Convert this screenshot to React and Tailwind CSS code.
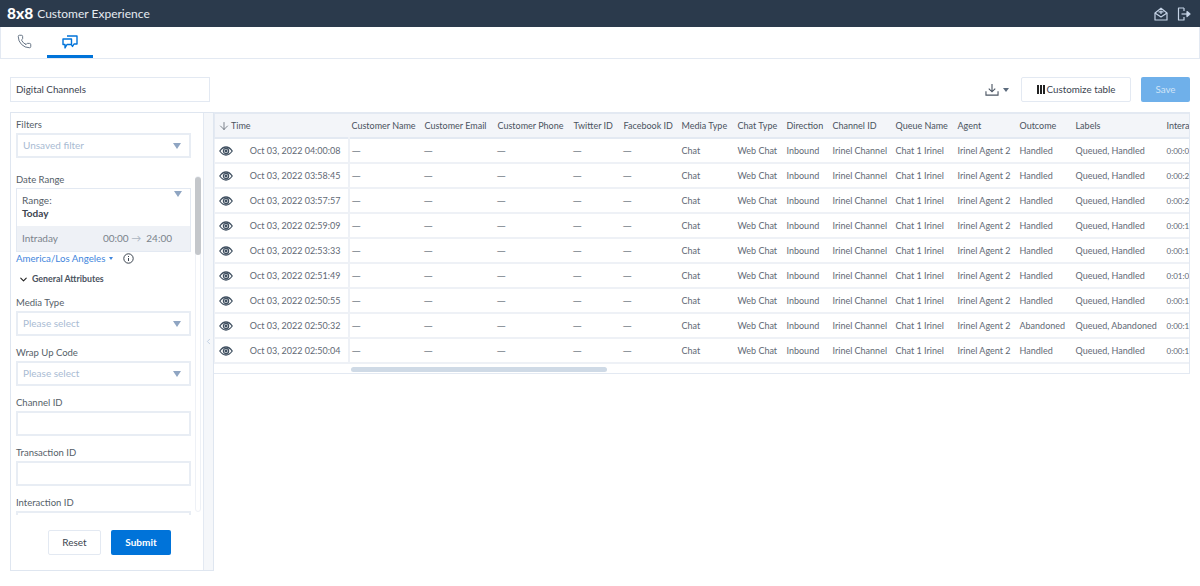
import { ChevronDown, ChevronLeft, ArrowDown, Phone } from "lucide-react";

const rows = [
  ["Oct 03, 2022 04:00:08", "Handled", "Queued, Handled", "0:00:0"],
  ["Oct 03, 2022 03:58:45", "Handled", "Queued, Handled", "0:00:2"],
  ["Oct 03, 2022 03:57:57", "Handled", "Queued, Handled", "0:00:2"],
  ["Oct 03, 2022 02:59:09", "Handled", "Queued, Handled", "0:00:1"],
  ["Oct 03, 2022 02:53:33", "Handled", "Queued, Handled", "0:00:1"],
  ["Oct 03, 2022 02:51:49", "Handled", "Queued, Handled", "0:01:0"],
  ["Oct 03, 2022 02:50:55", "Handled", "Queued, Handled", "0:00:1"],
  ["Oct 03, 2022 02:50:32", "Abandoned", "Queued, Abandoned", "0:00:1"],
  ["Oct 03, 2022 02:50:04", "Handled", "Queued, Handled", "0:00:1"],
];

const headers = ["Customer Name", "Customer Email", "Customer Phone", "Twitter ID", "Facebook ID", "Media Type", "Chat Type", "Direction", "Channel ID", "Queue Name", "Agent", "Outcome", "Labels"];

function Caret() {
  return <span className="w-0 h-0 border-l-[4px] border-r-[4px] border-t-[6px] border-l-transparent border-r-transparent border-t-[#8fa5c2]" />;
}

function Field({ label, placeholder, caret, className = "" }) {
  return (
    <div className={className}>
      <div className="text-[9.5px] leading-[12px] text-[#555e68] mb-[2px]">{label}</div>
      <div className="h-[25px] border-2 border-[#e8edf4] flex items-center justify-between pl-[5px] pr-[8px] text-[10px] text-[#a9bbd3]">
        <span>{placeholder}</span>
        {caret && <Caret />}
      </div>
    </div>
  );
}

function Dash() {
  return <td className="pl-[2px] text-[12px] leading-none text-[#7b838c]">—</td>;
}

function ChatIcon() {
  return (
    <svg width="16" height="15" viewBox="0 0 16 15" fill="none" stroke="#0073d9" strokeWidth="1.4" strokeLinejoin="round">
      <path d="M5 1H15V9H12L10.5 11.5L9 9" />
      <path d="M1 4H9.5V9.5H5L3 13V9.5H1Z" fill="#fff" />
    </svg>
  );
}

function EyeIcon() {
  return (
    <svg width="14" height="10" viewBox="0 0 14 10" fill="none" stroke="#3f4f60" strokeWidth="1.3">
      <path d="M0.8 5C3 1.8 5 1 7 1C9 1 11 1.8 13.2 5C11 8.2 9 9 7 9C5 9 3 8.2 0.8 5Z" />
      <circle cx="7" cy="5" r="2.6" />
      <circle cx="7" cy="5" r="0.8" fill="#3f4f60" />
    </svg>
  );
}

function MailIcon() {
  return (
    <svg width="14" height="14" viewBox="0 0 14 14" fill="none" stroke="#c5d3e6" strokeWidth="1.2" strokeLinejoin="round">
      <path d="M1 6L7 1.2L13 6V13H1Z" />
      <path d="M1 6L7 10L13 6" />
      <path d="M4.5 4.8H9.5M7 3.4V7" />
    </svg>
  );
}

function ExitIcon() {
  return (
    <svg width="14" height="14" viewBox="0 0 14 14" fill="none" stroke="#c5d3e6" strokeWidth="1.2" strokeLinejoin="round">
      <path d="M7 1H1.5V13H7V10" />
      <path d="M7 1V4" />
      <path d="M4.5 7H11" />
      <path d="M10 4.5L13 7L10 9.5Z" fill="#c5d3e6" />
    </svg>
  );
}

function InfoIcon() {
  return (
    <svg width="11" height="11" viewBox="0 0 11 11" fill="none" stroke="#3c4550" strokeWidth="1" className="ml-[10px]">
      <circle cx="5.5" cy="5.5" r="4.7" />
      <path d="M5.5 5V8M5.5 3V4" />
    </svg>
  );
}

export default function App() {
  return (
    <div className="w-[1200px] h-[586px] overflow-hidden bg-white font-['Lato',sans-serif] flex flex-col">
      {/* top bar */}
      <div className="h-[27px] bg-[#2b3a4c] flex items-center justify-between pl-[7px] pr-[9px] shrink-0">
        <div className="flex items-center">
          <span className="text-white font-black text-[15.5px] mr-[4px]">8x8</span>
          <span className="text-[#e6ebf1] text-[12px]">Customer Experience</span>
        </div>
        <div className="flex items-center gap-[9px]">
          <MailIcon />
          <ExitIcon />
        </div>
      </div>

      {/* tabs */}
      <div className="h-[32px] border-b border-x border-[#e3e9f2] flex shrink-0 pl-px">
        <div className="w-[45px] flex items-center justify-center pb-[2px]">
          <Phone size={15} strokeWidth={1.5} className="text-[#5c6b7d]" />
        </div>
        <div className="w-[46px] flex items-center justify-center border-b-[3px] border-[#0073d9] h-[31px] pt-[2px]">
          <ChatIcon />
        </div>
      </div>

      {/* toolbar */}
      <div className="h-[53px] shrink-0 flex items-center justify-between pl-[10px] pr-[10px] pt-[8px]">
        <div className="w-[200px] h-[25px] border border-[#e3e9f2] flex items-center pl-[5px] text-[9.8px] text-[#3c4550]">Digital Channels</div>
        <div className="flex items-center">
          <svg width="14" height="13" viewBox="0 0 15 14" fill="none" stroke="#4b5563" strokeWidth="1.2">
            <path d="M7.5 1V9M4 6L7.5 9.5L11 6" />
            <path d="M1 9V13H14V9" />
          </svg>
          <span className="ml-[4px] mr-[12px] w-0 h-0 border-l-[3px] border-r-[3px] border-t-[4px] border-l-transparent border-r-transparent border-t-[#5c6b7d]" />
          <div className="w-[110px] h-[25px] border border-[#e3e9f2] rounded-[2px] flex items-center justify-center text-[9.8px] text-[#3c4550]">
            <span className="flex gap-px mr-[2px]">
              <span className="w-[2px] h-[9px] bg-[#222]" />
              <span className="w-[2px] h-[9px] bg-[#222]" />
              <span className="w-[2px] h-[9px] bg-[#222]" />
            </span>
            Customize table
          </div>
          <div className="ml-[10px] w-[49px] h-[25px] bg-[#6fb0ea] rounded-[2px] flex items-center justify-center text-[9.8px] text-[#cfe4f7]">Save</div>
        </div>
      </div>

      {/* content */}
      <div className="flex pl-[10px] pr-[10px] items-start">
        {/* filters */}
        <div className="w-[204px] h-[459px] border border-[#dfe6f0] flex shrink-0">
          <div className="w-[192px] flex flex-col shrink-0">
            <div className="h-[402px] overflow-hidden relative pl-[5px] pr-[12px] pt-[6px]">
              <Field label="Filters" placeholder="Unsaved filter" caret />
              <div className="text-[9.5px] leading-[12px] text-[#555e68] mt-[16px] mb-[2px]">Date Range</div>
              <div className="border border-[#e3e9f2]">
                <div className="h-[37px] pl-[5px] pr-[8px] pt-[5px] flex justify-between">
                  <div className="text-[10px] leading-[13px] text-[#555e68]">
                    <div>Range:</div>
                    <div className="font-bold text-[#3c4550]">Today</div>
                  </div>
                  <span className="mt-[1px]"><Caret /></span>
                </div>
                <div className="h-[25px] bg-[#eef1f6] flex items-center pl-[5px] pr-[18px] justify-between text-[10px] text-[#7b838c]">
                  <span>Intraday</span>
                  <span>00:00 <span className="text-[#aab4c0]">→</span>&nbsp; 24:00</span>
                </div>
              </div>
              <div className="flex items-center -mt-px h-[14px] text-[9.7px] text-[#3f86dd]">
                <span>America/Los Angeles</span>
                <span className="ml-[4px] w-0 h-0 border-l-[2px] border-r-[2px] border-t-[3px] border-l-transparent border-r-transparent border-t-[#3f86dd]" />
                <InfoIcon />
              </div>
              <div className="flex items-center mt-[7px] text-[8.8px] font-bold text-[#4a535e] h-[14px]">
                <ChevronDown size={11} strokeWidth={2.4} className="ml-[2px] mr-[3px] text-[#222]" />
                General Attributes
              </div>
              <Field label="Media Type" placeholder="Please select" caret className="mt-[11px]" />
              <Field label="Wrap Up Code" placeholder="Please select" caret className="mt-[11px]" />
              <Field label="Channel ID" className="mt-[11px]" />
              <Field label="Transaction ID" className="mt-[11px]" />
              <Field label="Interaction ID" className="mt-[11px]" />
              {/* scrollbar */}
              <div className="absolute left-[184px] top-[63px] w-[6px] h-[336px] rounded-[3px] border border-[#eef1f6]">
                <div className="h-[78px] bg-[#c4c7cb] rounded-[3px] -mx-px" />
              </div>
            </div>
            <div className="flex-1 flex items-start pl-[37px] pt-[15px] gap-[10px]">
              <div className="w-[53px] h-[25px] border border-[#e3e9f2] rounded-[2px] flex items-center justify-center text-[10px] text-[#3c4550]">Reset</div>
              <div className="w-[60px] h-[25px] bg-[#0073d9] rounded-[2px] flex items-center justify-center text-[10px] font-bold text-white">Submit</div>
            </div>
          </div>
          {/* collapse rail */}
          <div className="flex-1 bg-[#f5f7fa] border-l border-[#e3e9f2] flex items-center justify-center">
            <ChevronLeft size={9} strokeWidth={1.5} className="text-[#9db4d2] -mt-[1px]" />
          </div>
        </div>

        {/* table */}
        <div className="flex-1 min-w-0 h-[262px] border border-l-0 border-[#e3e9f2] border-t-2 overflow-hidden relative">
          <table className="table-fixed w-[1000px] border-collapse text-[9px] text-[#5f6975]">
            <colgroup>
              <col className="w-[134px]" />
              <col className="w-[73px]" />
              <col className="w-[73px]" />
              <col className="w-[76px]" />
              <col className="w-[50px]" />
              <col className="w-[58px]" />
              <col className="w-[56px]" />
              <col className="w-[49px]" />
              <col className="w-[46px]" />
              <col className="w-[63px]" />
              <col className="w-[62px]" />
              <col className="w-[62px]" />
              <col className="w-[56px]" />
              <col className="w-[91px]" />
              <col className="w-[51px]" />
            </colgroup>
            <thead>
              <tr className="h-[24px] bg-[#f3f5f9] border-b-2 border-[#e3e9f2] text-[#4a535e]">
                <th className="font-normal text-left pl-[3px] border-l border-[#e3e9f2]">
                  <span className="flex items-center">
                    <ArrowDown size={12} strokeWidth={1.4} className="mr-px" />Time
                  </span>
                </th>
                {headers.map((h) => (
                  <th key={h} className="font-normal text-left pl-[3px] whitespace-nowrap overflow-hidden">{h}</th>
                ))}
                {/* last column runs past the panel edge */}
                <th className="font-normal text-left pl-[3px] whitespace-nowrap">Intera</th>
              </tr>
            </thead>
            <tbody>
              {rows.map((r) => (
                <tr key={r[0]} className="h-[25px] border-b-2 border-[#eef1f6]">
                  <td className="border-l border-r-2 border-[#eef1f6] pl-[4px]">
                    <span className="flex items-center justify-between pr-[7px]">
                      <EyeIcon />
                      {r[0]}
                    </span>
                  </td>
                  <Dash />
                  <Dash />
                  <Dash />
                  <Dash />
                  <Dash />
                  <td className="pl-[3px]">Chat</td>
                  <td className="pl-[3px] whitespace-nowrap">Web Chat</td>
                  <td className="pl-[3px]">Inbound</td>
                  <td className="pl-[3px] whitespace-nowrap">Irinel Channel</td>
                  <td className="pl-[3px] whitespace-nowrap">Chat 1 Irinel</td>
                  <td className="pl-[3px] whitespace-nowrap">Irinel Agent 2</td>
                  <td className="pl-[3px]">{r[1]}</td>
                  <td className="pl-[3px] whitespace-nowrap">{r[2]}</td>
                  <td className="pl-[3px] whitespace-nowrap text-[8px]">{r[3]}</td>
                </tr>
              ))}
            </tbody>
          </table>
          {/* horizontal scrollbar */}
          <div className="absolute left-[137px] bottom-px w-[256px] h-[5px] rounded-[3px] bg-[#cfdae6]" />
        </div>
      </div>
    </div>
  );
}
